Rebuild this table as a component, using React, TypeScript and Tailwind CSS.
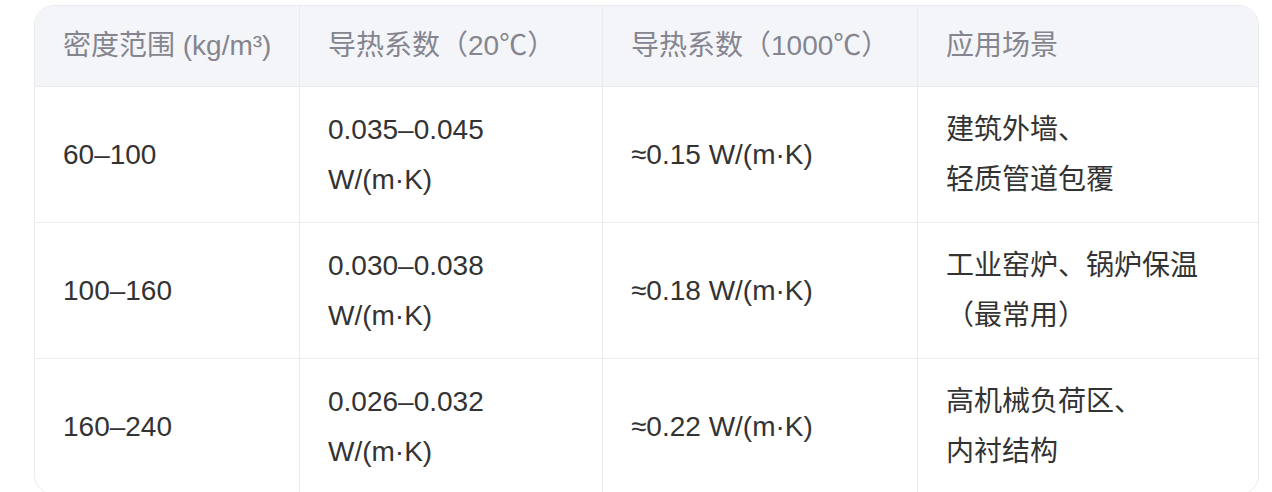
const headers = ["密度范围 (kg/m³)", "导热系数（20℃）", "导热系数（1000℃）", "应用场景"];

const rows: string[][][] = [
  [["60–100"], ["0.035–0.045", "W/(m·K)"], ["≈0.15 W/(m·K)"], ["建筑外墙、", "轻质管道包覆"]],
  [["100–160"], ["0.030–0.038", "W/(m·K)"], ["≈0.18 W/(m·K)"], ["工业窑炉、锅炉保温", "（最常用）"]],
  [["160–240"], ["0.026–0.032", "W/(m·K)"], ["≈0.22 W/(m·K)"], ["高机械负荷区、", "内衬结构"]],
];

export default function App() {
  return (
    <div
      className="bg-white min-h-screen pt-[5px] pl-[34px]"
      style={{ fontFamily: '"Liberation Sans", Arial, "Noto Sans CJK SC", sans-serif' }}
    >
      <div className="w-[1225px] border border-[#ebebee] rounded-[20px] overflow-hidden bg-white">
        <div className="grid grid-cols-[265px_303px_315px_1fr] text-[28px] leading-[50px]">
          {/* header */}
          {headers.map((h, i) => (
            <div
              key={h}
              className={
                "bg-[#f4f5f9] text-[#85858f] px-[28px] py-[15px] border-b border-[#ebebee] whitespace-nowrap " +
                (i < 3 ? "border-r" : "")
              }
            >
              {h}
            </div>
          ))}

          {/* body */}
          {rows.map((row, r) =>
            row.map((cell, c) => (
              <div
                key={r + "-" + c}
                className={
                  "flex items-center px-[28px] pt-[18px] pb-[17px] text-[#333333] border-[#ebebee] " +
                  (c < 3 ? "border-r " : "") +
                  (r < 2 ? "border-b" : "")
                }
              >
                <div>
                  {cell.map((line) => (
                    <div key={line} className="whitespace-nowrap">
                      {line}
                    </div>
                  ))}
                </div>
              </div>
            ))
          )}
        </div>
      </div>
    </div>
  );
}
